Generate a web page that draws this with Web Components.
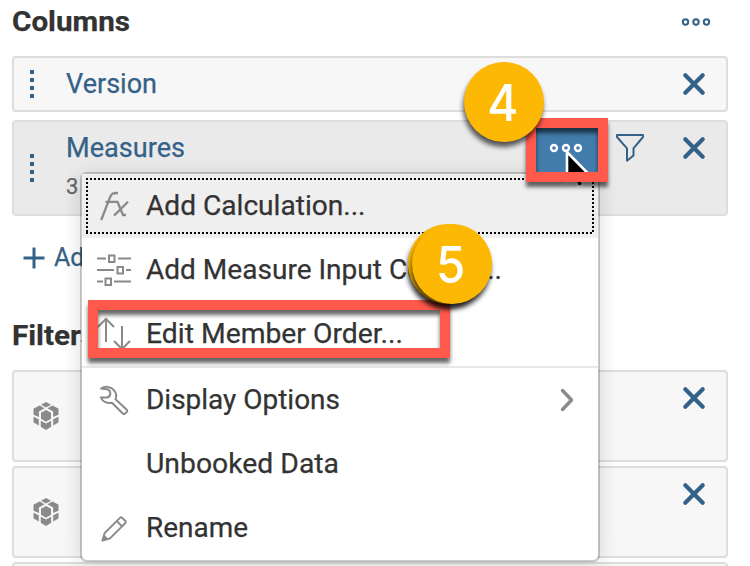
<!DOCTYPE html>
<html lang="en"><head><meta charset="utf-8"><title>Builder panel</title>
<style>
html,body{margin:0;width:750px;height:566px;overflow:hidden;background:#fff;font-family:Roboto,"Liberation Sans",sans-serif;color:#333}
</style></head><body>
<builder-panel></builder-panel>
<script>
const define=(name,html,init)=>customElements.define(name,class extends HTMLElement{
  connectedCallback(){
    if(this.shadowRoot)return;
    const t=document.createElement('template');
    t.innerHTML=typeof html==='function'?html(this):html;
    this.attachShadow({mode:'open'}).append(t.content.cloneNode(true));
    if(init)init(this);
  }
});

const icons={
close:['22','22','<path d="M2.3 2.3 19.7 19.7M19.7 2.3 2.3 19.7" stroke-width="4.2" stroke-linecap="round"/>'],
more:['30','10','<g stroke-width="2"><circle cx="4.5" cy="5" r="2.7"/><circle cx="15" cy="5" r="2.7"/><circle cx="25.5" cy="5" r="2.7"/></g>'],
dots:['34','10','<g stroke-width="2.4"><circle cx="5" cy="5" r="3"/><circle cx="17" cy="5" r="3"/><circle cx="29" cy="5" r="3"/></g>'],
funnel:['28','28','<path d="M1 1H27V3L17.5 14.3V21.5L11 26.7V14.3L1 3Z" stroke-width="2" stroke-linejoin="round"/>'],
plus:['22','22','<path d="M11 0.5V21.5M0.5 11H21.5" stroke-width="3"/>'],
grip:['4','28','<path d="M2 0V28" stroke-width="4" stroke-dasharray="4 4"/>'],
fx:['36','36','<path d="M5.2 32 14.2 8.8C15.3 5.8 16.8 4.8 22 5M9.5 13.8H21.5L27 27H30M32 13.8 18 27.6" stroke-width="2.3"/>'],
sliders:['36','36','<path d="M1 6.5H10M22 6.5H35M1 18H18M30 18H35M1 29.5H7M18 29.5H35M13 3.5H18.5V10H13ZM21.5 15H27V21.5H21.5ZM9.5 26.5H15V33H9.5Z" stroke-width="2"/>'],
order:['36','36','<path d="M10 26V3.5M1.8 11 10 2.8 18 11M26 10V33M18 25 26 33 34 25" stroke-width="2"/>'],
wrench:['36','36','<path d="M5 6.5C9.5 3.8 15 4.5 18 8.2C20.5 11.5 20.6 14.8 19.5 17.2L31 28Q31.8 29 30.8 30L28.8 31.8Q28 32.5 27 31.7L16 20.7C11.5 22 6.5 19.8 4.8 15.5H11.2Q14.4 14.8 14.3 11.2Q14 7.7 11 7.2Z" stroke-width="2" stroke-linejoin="round"/>'],
pencil:['36','36','<path d="M6.4 30.6 8.7 23 24 7.8Q25 6.8 26 7.8L29.5 11Q30.2 12 29.4 13L14 28.3Z M20.8 11 26 16.3" stroke-width="1.9" stroke-linejoin="round"/><path d="M5.7 31.3 8 24.5 12.5 29Z" fill="currentColor" stroke="none"/>'],
chevron:['14','24','<path d="M2.5 2.5 11.5 12 2.5 21.5" stroke-width="3.4" stroke-linecap="round" stroke-linejoin="round"/>'],
cube:['26','28','<g fill="currentColor" stroke="none"><path d="M13 0 18 2.8 13 5.5 8 2.8ZM6.6 3.5 11.5 6.2 5.9 9.5 5.9 15 .5 12.7V7Q.6 6.5 1.2 6.2ZM19.4 3.5 14.5 6.2 20.1 9.5 20.1 15 25.5 12.7V7Q25.4 6.5 24.8 6.2ZM13 8 18 10.8V16.8L13 19.8 8 16.8V10.8ZM.5 14.7 5.8 17.3V23.5L1 20.8Q.5 20.5.5 20ZM25.5 14.7 20.2 17.3V23.5L25 20.8Q25.5 20.5 25.5 20ZM7.8 18.8 13 21.6 18.2 18.8V24.8L13 28 7.8 24.8Z"/></g>'],
pointer:['30','42','<path d="M2 2V33L9 27 13 37 18.5 35 15 26.5H26Z" fill="#000" stroke="#fff" stroke-width="2.6"/>']
};
define('ui-icon',el=>{const[w,h,p]=icons[el.getAttribute('name')];
return `<style>:host{display:inline-flex;flex:none}svg{display:block;overflow:visible}</style><svg width="${w}" height="${h}" viewBox="0 0 ${w} ${h}" fill="none" stroke="currentColor">${p}</svg>`});

// A single line of text stretched horizontally to the advance width in "fit".
define('ui-text','<style>:host{display:block;white-space:nowrap;font-size:27px;line-height:32px}span{display:inline-block;transform-origin:0 50%;-webkit-text-stroke:.25px}</style><span><slot></slot></span>',el=>{
  const fit=+el.getAttribute('fit');if(!fit)return;
  const s=el.shadowRoot.querySelector('span');
  s.style.transform='scaleX('+fit/s.getBoundingClientRect().width+')';
});

define('dimension-card',`<style>
:host{display:grid;grid-template-columns:52px 1fr auto;box-sizing:border-box;border:2px solid #ddd;border-radius:4px;background:#f7f7f7;color:#346187}
.lead{display:flex;align-items:center;padding-left:16px}
.body{padding-top:10px}
.actions{display:flex;align-items:center;height:52px;padding-right:21px}
</style><div class="lead"><slot name="lead"></slot></div><div class="body"><slot></slot></div><div class="actions"><slot name="actions"></slot><ui-icon name="close"></ui-icon></div>`);

define('menu-item',`<style>
:host{display:grid;grid-template-columns:64px 1fr auto;align-items:center;height:64px;box-sizing:border-box;position:relative}
:host([active]){background:#efefef}
.icon{padding-left:14px;color:#8a8a8a;display:flex}
.end{padding-right:24px;color:#8a8a8a;display:flex}
svg{display:none;position:absolute;left:4px;top:4px}
:host([active]) svg{display:block}
</style><div class="icon"><slot name="icon"></slot></div><slot></slot><div class="end"><slot name="end"></slot></div>
<svg width="508" height="56" fill="none" stroke="#000" stroke-width="2"><path d="M0 1H508M0 55H508M1 0V56M507 0V56" stroke-dasharray="2 2"/></svg>`);

define('context-menu',`<style>
:host{display:block;box-sizing:border-box;width:520px;height:390px;border:2px solid rgba(0,0,0,.2);border-radius:7px;background:#fff;background-clip:padding-box;box-shadow:0 4px 20px rgba(0,0,0,.14)}
hr{margin:0;border:0;height:2px;background:#e8e8e8}
</style>
<menu-item active><ui-icon slot="icon" name="fx"></ui-icon><ui-text fit="219.5">Add Calculation...</ui-text></menu-item>
<menu-item><ui-icon slot="icon" name="sliders"></ui-icon><ui-text fit="356">Add Measure Input Control...</ui-text></menu-item>
<menu-item><ui-icon slot="icon" name="order"></ui-icon><ui-text fit="257">Edit Member Order...</ui-text></menu-item>
<hr>
<menu-item><ui-icon slot="icon" name="wrench"></ui-icon><ui-text fit="194">Display Options</ui-text><ui-icon slot="end" name="chevron"></ui-icon></menu-item>
<menu-item><ui-text fit="193">Unbooked Data</ui-text></menu-item>
<menu-item><ui-icon slot="icon" name="pencil"></ui-icon><ui-text fit="102">Rename</ui-text></menu-item>`);

define('callout-frame',`<style>:host{display:block;box-sizing:border-box;border:10px solid #ff594b;box-shadow:0 5px 4px rgba(0,0,0,.6),inset 0 5px 4px rgba(0,0,0,.6)}</style>`);
define('callout-badge',`<style>:host{display:flex;align-items:center;justify-content:center;width:80px;height:80px;border-radius:50%;background:#fcb803;color:#fff;font:500 51px/80px Inter,sans-serif;box-shadow:-1px 5px 5px rgba(0,0,0,.65)}span{transform:translate(-1px,1px) scaleX(.93)}</style><span><slot></slot></span>`);

define('builder-panel',`<style>
:host{display:block;position:relative;width:750px;height:566px;overflow:hidden}
main{display:flex;flex-direction:column;padding:0 22px 0 12px}
header{display:flex;align-items:center;justify-content:space-between;height:44px;padding-right:17px;margin-bottom:12px;color:#346187}
h2{margin:0;color:#333}
h2 ui-text{font-weight:700}
.v{height:56px;margin-bottom:8px}
.m{height:96px;background:#eaeaea}
.sub{font-size:22px;line-height:28px;color:#666;margin-top:9px}
.tools{display:flex;align-items:center;width:67px}
.add{display:flex;align-items:center;gap:9px;height:84px;padding-left:11px;color:#346187}
.add ui-text{font-size:25px}
.filters{height:70px;display:flex;align-items:center}
.filters ui-text{margin-top:2px}
.c{height:92px;margin-bottom:4px}
.c .q{color:#8a8a8a;margin-left:3px}
.over{position:absolute}
.button{left:536px;top:128px;width:62px;height:44px;background:#427cac;color:#fff;display:flex;box-sizing:border-box;padding:15px 0 0 13px;overflow:hidden}
</style>
<main>
<header><h2><ui-text fit="118">Columns</ui-text></h2><ui-icon name="more"></ui-icon></header>
<dimension-card class="v"><ui-icon slot="lead" name="grip"></ui-icon><ui-text fit="91">Version</ui-text></dimension-card>
<dimension-card class="m"><ui-icon slot="lead" name="grip"></ui-icon><ui-text fit="119">Measures</ui-text><ui-text class="sub">3</ui-text><div class="tools" slot="actions"><ui-icon name="funnel"></ui-icon></div></dimension-card>
<div class="add"><ui-icon name="plus"></ui-icon><ui-text>Add</ui-text></div>
<div class="filters"><h2><ui-text fit="84">Filters</ui-text></h2></div>
<dimension-card class="c"><ui-icon class="q" slot="lead" name="cube"></ui-icon></dimension-card>
<dimension-card class="c"><ui-icon class="q" slot="lead" name="cube"></ui-icon></dimension-card>
<dimension-card class="c"></dimension-card>
</main>
<context-menu class="over" style="left:80px;top:172px"></context-menu>
<div class="over button"><ui-icon name="dots"></ui-icon></div>
<ui-icon class="over" name="pointer" style="left:565px;top:150px"></ui-icon>
<callout-frame class="over" style="left:526px;top:118px;width:82px;height:64px"></callout-frame>
<callout-frame class="over" style="left:88px;top:300px;width:362px;height:58px"></callout-frame>
<callout-badge class="over" style="left:464px;top:62px">4</callout-badge>
<callout-badge class="over" style="left:408px;top:224px"></callout-badge>
<callout-badge class="over" style="left:412px;top:224px">5</callout-badge>`);
</script></body></html>
